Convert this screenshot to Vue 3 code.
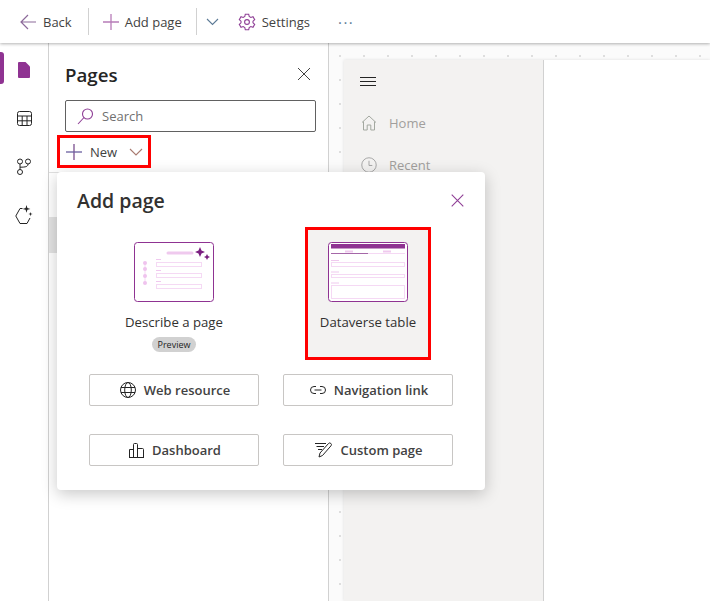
<script setup>
const railItems = ['page', 'table', 'flow', 'spark']
</script>

<template>
  <div class="shell">
    <header class="topbar">
      <button class="cmd">
        <svg width="18" height="16" viewBox="0 0 18 16" fill="none"><path d="M9 1 2 8l7 7M2 8h15" stroke="#8c6a9a" stroke-width="1.2"/></svg>
        <span>Back</span>
      </button>
      <i class="sep"></i>
      <button class="cmd add">
        <svg width="16" height="16" viewBox="0 0 16 16" fill="none"><path d="M8 0v16M0 8h16" stroke="#b77cb8" stroke-width="1.3"/></svg>
        <span>Add page</span>
      </button>
      <i class="sep"></i>
      <svg class="chev" width="13" height="8" viewBox="0 0 13 8" fill="none"><path d="m1 1 5.500 5.500L12 1" stroke="#5c7a96" stroke-width="1.1"/></svg>
      <button class="cmd settings">
        <svg width="18" height="18" viewBox="0 0 18 18" fill="none" stroke="#8f3f96" stroke-width="1.1"><path d="M7.300 1.200h3.400l.5 2.300 1.600.9 2.200-.7 1.700 3-1.700 1.500v1.600l1.700 1.500-1.700 3-2.200-.7-1.600.9-.5 2.300H7.300l-.5-2.300-1.600-.9-2.200.7-1.700-3 1.700-1.500V8.200L1.300 6.700l1.700-3 2.200.7 1.600-.9z"/><circle cx="9" cy="9" r="2.400"/></svg>
        <span>Settings</span>
      </button>
      <span class="more">···</span>
    </header>

    <div class="body">
      <nav class="rail">
        <div v-for="item in railItems" :key="item" class="rail-item">
          <svg v-if="item === 'page'" width="12" height="16" viewBox="0 0 12 16"><path d="M1 0h6.500L12 4.500V15a1 1 0 0 1-1 1H1a1 1 0 0 1-1-1V1a1 1 0 0 1 1-1z" fill="#8f3392"/></svg>
          <svg v-else-if="item === 'table'" width="15" height="15" viewBox="0 0 15 15" fill="none" stroke="#242424"><rect x=".5" y=".5" width="14" height="14" rx="2"/><path d="M.5 5h14M.5 9.800h14M5.200 5v9.500M10 5v9.500"/></svg>
          <svg v-else-if="item === 'flow'" width="14" height="17" viewBox="0 0 14 17" fill="none" stroke="#242424"><circle cx="3" cy="3.500" r="2.500"/><circle cx="11" cy="3.500" r="2.500"/><circle cx="3" cy="14" r="2.500"/><path d="M3 6v5.500M11 6c0 2.500-2 3.200-8 3.200"/></svg>
          <svg v-else width="18" height="19" viewBox="0 0 18 19" fill="none"><path d="M7.500 3.500H5L.8 11 5 18.500h7l3-5.500" stroke="#242424"/><path d="M11.500 0l.9 3 3 .9-3 .9-.9 3-.9-3-3-.9 3-.9zM15.500 7l.5 1.600 1.600.5-1.600.5-.5 1.600-.5-1.600-1.600-.5 1.600-.5z" fill="#242424"/></svg>
        </div>
        <i class="rail-mark"></i>
      </nav>

      <aside class="pages">
        <div class="pages-head">
          <h2>Pages</h2>
          <svg width="14" height="14" viewBox="0 0 14 14" fill="none"><path d="m1 1 12 12M13 1 1 13" stroke="#424242"/></svg>
        </div>
        <div class="search">
          <svg width="17" height="17" viewBox="0 0 17 17" fill="none"><circle cx="10.500" cy="6" r="5" stroke="#8f3f96" stroke-width="1.1"/><path d="m7 9.500-6 6.500" stroke="#8f3f96" stroke-width="1.1"/></svg>
          <span>Search</span>
        </div>
        <div class="new-row">
          <svg width="16" height="16" viewBox="0 0 16 16" fill="none"><path d="M8 0v16" stroke="#7a4f8f" stroke-width="1.3"/><path d="M0 8h16" stroke="#6a5fa0" stroke-width="1.3"/></svg>
          <span>New</span>
          <svg width="14" height="8" viewBox="0 0 14 8" fill="none"><path d="m1 1 6 6 6-6" stroke="#a87a70" stroke-width="1.1"/></svg>
        </div>
        <div class="pages-list"><i class="selected-row"></i></div>
      </aside>

      <main class="canvas">
        <div class="preview">
          <div class="preview-nav">
            <svg class="burger" width="16" height="10" viewBox="0 0 16 10" fill="none"><path d="M0 .5h16M0 4.500h16M0 8.500h16" stroke="#242424"/></svg>
            <div class="nav-link">
              <svg width="16" height="16" viewBox="0 0 16 16" fill="none" stroke="#a3a8a0"><path d="M1 7.500 8 1l7 6.500M2.500 6.500V15h3.700v-5h3.600v5h3.700V6.500"/></svg>
              <span>Home</span>
            </div>
            <div class="nav-link">
              <svg width="16" height="16" viewBox="0 0 17 17" fill="none" stroke="#a3a3a3"><circle cx="8.500" cy="8.500" r="7.700"/><path d="M8.500 4v5H12"/></svg>
              <span>Recent</span>
            </div>
          </div>
        </div>
      </main>
    </div>

    <section class="dialog">
      <div class="dialog-head">
        <h3>Add page</h3>
        <svg width="13" height="13" viewBox="0 0 13 13" fill="none"><path d="m.7.7 11.600 11.600M12.300.7.700 12.300" stroke="#8f3f96" stroke-width="1.1"/></svg>
      </div>
      <div class="choices">
        <div class="choice">
          <svg width="80" height="60" viewBox="0 0 80 60" fill="none">
            <rect x=".5" y=".5" width="79" height="59" rx="3" fill="#fff" stroke="#8f3392"/>
            <path d="M34 11h24" stroke="#efc9ee" stroke-width="3" stroke-linecap="round"/>
            <path d="M66 5l1.500 3.500L71 10l-3.500 1.500L66 15l-1.500-3.500L61 10l3.500-1.500zM73 12l1 2 2 1-2 1-1 2-1-2-2-1 2-1z" fill="#7a1f80"/>
            <g stroke="#f5d9f4"><rect x="22.500" y="20.500" width="45" height="4"/><rect x="22.500" y="31.500" width="45" height="4"/><rect x="22.500" y="42.500" width="45" height="4"/></g>
            <path d="M22 17.500h5M22 28.500h5M22 39.500h5" stroke="#f0c8ef"/>
            <path d="M11 21v20" stroke="#f5d9f4"/>
            <g fill="#efc3ee"><circle cx="11" cy="21" r="2"/><circle cx="11" cy="27" r="2"/><circle cx="11" cy="34" r="2"/><circle cx="11" cy="41" r="2"/></g>
          </svg>
          <div class="choice-label">Describe a page</div>
          <span class="pill">Preview</span>
        </div>
        <div class="choice picked">
          <svg width="80" height="60" viewBox="0 0 80 60" fill="none">
            <rect x=".5" y=".5" width="79" height="59" rx="3" fill="#fff" stroke="#8f3392"/>
            <path d="M3 2h74v4.500H3z" fill="#8f3392"/>
            <path d="M17 9.500h8M55 9.500h8" stroke="#efc9ee" stroke-width="2"/>
            <path d="M3 11.500h74" stroke="#f5d9f4"/>
            <path d="M3 11.500h37" stroke="#a567a8"/>
            <path d="M3 18.500h8M3 30h8M3 41h8" stroke="#efc9ee"/>
            <g stroke="#f5d9f4"><rect x="3.500" y="20.500" width="73" height="4"/><rect x="3.500" y="32.500" width="73" height="3"/><rect x="3.500" y="43.500" width="73" height="13"/></g>
          </svg>
          <div class="choice-label">Dataverse table</div>
        </div>
      </div>
      <div class="actions">
        <button class="wide">
          <svg width="16" height="16" viewBox="0 0 16 16" fill="none" stroke="#242424"><circle cx="8" cy="8" r="7.500"/><ellipse cx="8" cy="8" rx="3.300" ry="7.500"/><path d="M1 5.500h14M1 10.500h14"/></svg>
          Web resource
        </button>
        <button class="wide">
          <svg width="16" height="8" viewBox="0 0 16 8" fill="none" stroke="#242424"><path d="M6 .5H4a3.500 3.500 0 0 0 0 7h2M10 .5h2a3.500 3.500 0 0 1 0 7h-2M4.500 4h7"/></svg>
          Navigation link
        </button>
        <button class="wide">
          <svg width="15" height="15" viewBox="0 0 15 15" fill="none" stroke="#242424"><path d="M.5 14.500v-8h4v8M4.500 14.500V1.500a1 1 0 0 1 1-1h2a1 1 0 0 1 1 1v13M8.500 14.500v-9h5a1 1 0 0 1 1 1v8zM0 14.500h15"/></svg>
          Dashboard
        </button>
        <button class="wide">
          <svg width="17" height="16" viewBox="0 0 17 16" fill="none" stroke="#242424"><path d="M0 1.500h11M1.500 4.500H9M3 7.500h4M4 15l1-4 8.500-9.500a1.700 1.700 0 0 1 2.500 2.300L7.500 13.500z"/></svg>
          Custom page
        </button>
      </div>
    </section>

    <!-- annotation boxes from the docs screenshot -->
    <i class="mark mark-new"></i>
    <i class="mark mark-table"></i>
  </div>
</template>

<style>
html, body {
  margin: 0;
  background: #fff;
}
</style>

<style scoped>
.shell {
  position: relative;
  width: 710px;
  height: 601px;
  overflow: hidden;
  font-family: "Open Sans", "Liberation Sans", sans-serif;
  color: #242424;
  display: flex;
  flex-direction: column;
}

.topbar {
  height: 43px;
  flex-shrink: 0;
  display: flex;
  align-items: center;
  padding-left: 19px;
  background: #fff;
  box-shadow: 0 1px 3px rgba(0, 0, 0, 0.3);
  position: relative;
  z-index: 2;
}

.cmd {
  display: flex;
  align-items: center;
  gap: 6px;
  border: 0;
  padding: 0;
  background: none;
  font: inherit;
  font-size: 13px;
  color: #424242;
}

.sep {
  width: 1px;
  height: 27px;
  background: #d1d1d1;
  margin: 0 14px 0 16px;
}

.add + .sep {
  margin: 0 9px 0 14px;
}

.chev {
  margin: 0 19px 0 0;
}

.more {
  margin-left: 28px;
  font-size: 15px;
  letter-spacing: 1.5px;
  color: #5c7a96;
}

.body {
  flex: 1;
  display: flex;
  min-height: 0;
}

.rail {
  width: 48px;
  flex-shrink: 0;
  border-right: 1px solid #d1d1d1;
  position: relative;
  padding-top: 3px;
}

.rail-item {
  height: 48px;
  display: flex;
  align-items: center;
  justify-content: center;
}

.rail-mark {
  position: absolute;
  left: 0;
  top: 9px;
  width: 4px;
  height: 32px;
  background: #8f3392;
  border-radius: 0 3px 3px 0;
}

.pages {
  width: 279px;
  flex-shrink: 0;
  border-right: 1px solid #d1d1d1;
  display: flex;
  flex-direction: column;
}

.pages-head {
  height: 57px;
  padding: 0 17px 0 16px;
  display: flex;
  align-items: center;
  justify-content: space-between;
}

.pages-head h2 {
  margin: 6px 0 0;
  font-size: 18.7px;
  font-weight: 600;
}

.pages-head svg {
  margin-top: 4px;
}

.search {
  margin-left: 16px;
  width: 251px;
  height: 32px;
  box-sizing: border-box;
  border: 1px solid #616161;
  border-radius: 2px;
  display: flex;
  align-items: center;
  gap: 8px;
  padding-left: 11px;
  font-size: 13px;
  color: #707070;
}

.new-row {
  height: 40px;
  padding-left: 17px;
  display: flex;
  align-items: center;
  gap: 8px;
  font-size: 13px;
  color: #424242;
}

.new-row span {
  margin-right: 4px;
}

.pages-list {
  flex: 1;
  border-top: 1px solid #e0e0e0;
  position: relative;
}

.selected-row {
  position: absolute;
  left: 0;
  top: 44px;
  width: 100%;
  height: 36px;
  background: #e3e3e3;
}

.canvas {
  flex: 1;
  padding: 17px 0 0 15px;
  background-color: #fbfbfb;
  background-image: radial-gradient(circle, #dedede 1px, transparent 1.2px);
  background-size: 24px 24px;
  background-position: -1px 1px;
}

.preview {
  height: 100%;
  background: #fff;
  box-shadow: 0 0 3px rgba(0, 0, 0, 0.12);
}

.preview-nav {
  width: 200px;
  height: 100%;
  box-sizing: border-box;
  background: #f3f2f1;
  border-right: 1px solid #d1d1d1;
  padding: 17px 0 0 16px;
}

.burger {
  display: block;
  margin-bottom: 15px;
}

.nav-link {
  display: flex;
  align-items: center;
  gap: 12px;
  height: 42px;
  padding-left: 1px;
  font-size: 13px;
  color: #a19f9d;
}

.dialog {
  position: absolute;
  left: 57px;
  top: 172px;
  width: 428px;
  height: 318px;
  box-sizing: border-box;
  background: #fff;
  border-radius: 4px;
  box-shadow: 0 4px 16px rgba(0, 0, 0, 0.22);
  padding: 0 32px;
  z-index: 3;
}

.dialog-head {
  height: 55px;
  margin: 0 -11px 0 -12px;
  display: flex;
  align-items: center;
  justify-content: space-between;
}

.dialog-head h3 {
  margin: 2px 0 0;
  font-size: 19.5px;
  font-weight: 600;
  color: #323130;
}

.dialog-head svg {
  margin-top: 2px;
}

.choices,
.actions {
  display: grid;
  grid-template-columns: 170px 170px;
  column-gap: 24px;
}

.choices {
  height: 147px;
  align-items: start;
}

.actions {
  grid-auto-rows: 32px;
  row-gap: 28px;
}

.choice {
  padding-top: 15px;
  height: 133px;
  box-sizing: border-box;
  display: flex;
  flex-direction: column;
  align-items: center;
}

.choice-label {
  font-size: 13.2px;
  margin-top: 11px;
  color: #323130;
}

.pill {
  margin-top: 6px;
  width: 44px;
  height: 15px;
  line-height: 15px;
  border-radius: 8px;
  background: #d1d1d1;
  text-align: center;
  font-size: 9px;
}

.picked {
  background: #f3f2f1;
  width: 125px;
  justify-self: center;
}

.wide {
  display: flex;
  align-items: center;
  justify-content: center;
  gap: 8px;
  border: 1px solid #c8c6c4;
  border-radius: 2px;
  background: #fff;
  font: inherit;
  font-size: 13px;
  font-weight: 600;
  color: #424242;
  padding: 0 0 0 2px;
}

.mark {
  position: absolute;
  border: 3px solid #ff0000;
  box-sizing: border-box;
  z-index: 4;
}

.mark-new {
  left: 57px;
  top: 135px;
  width: 94px;
  height: 33px;
}

.mark-table {
  left: 305px;
  top: 227px;
  width: 126px;
  height: 133px;
}
</style>
